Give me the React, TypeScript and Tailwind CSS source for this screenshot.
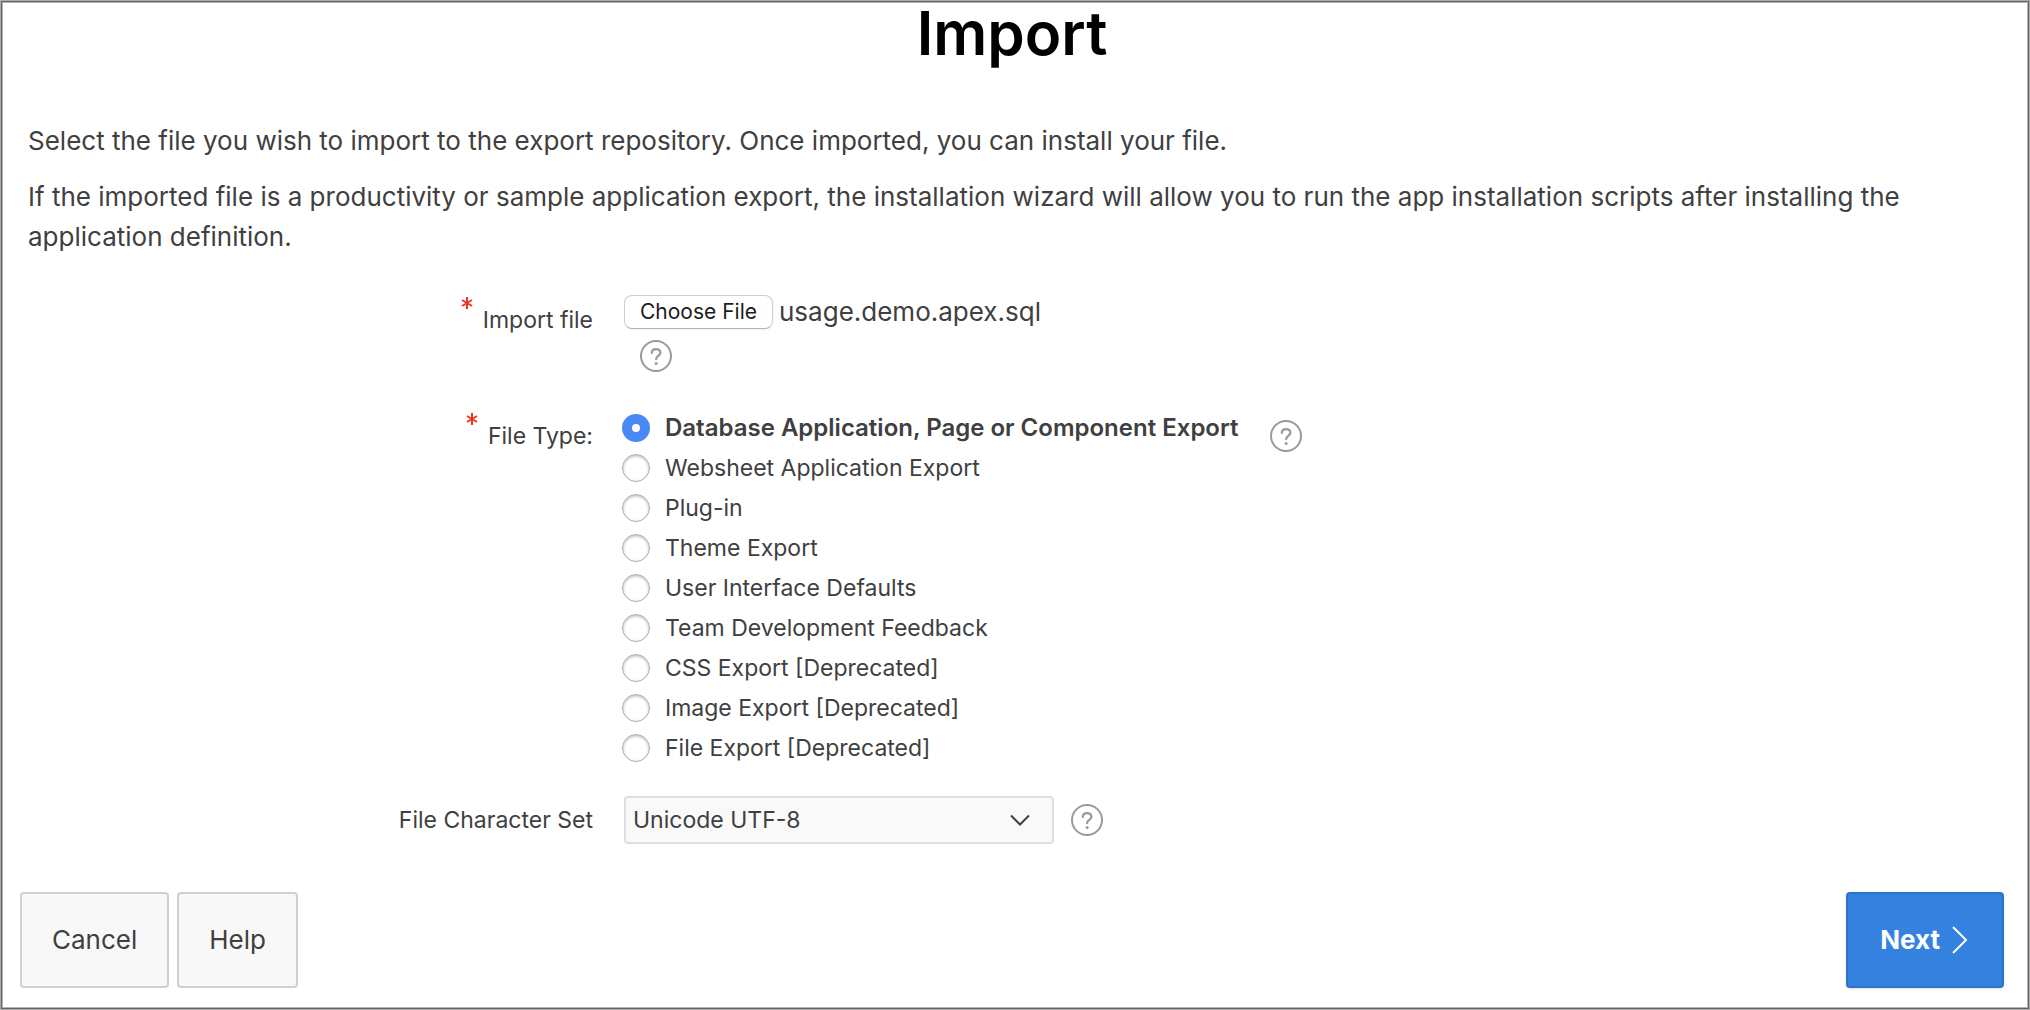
import { useRef, useState } from "react";

const fileTypes = [
  "Database Application, Page or Component Export",
  "Websheet Application Export",
  "Plug-in",
  "Theme Export",
  "User Interface Defaults",
  "Team Development Feedback",
  "CSS Export [Deprecated]",
  "Image Export [Deprecated]",
  "File Export [Deprecated]",
];

function HelpButton({ label }: { label: string }) {
  return (
    <button type="button" aria-label={label} className="block size-8 shrink-0 text-[#9a9a9a]">
      <svg viewBox="0 0 32 32" fill="none" stroke="currentColor" strokeWidth="2" className="size-8">
        <circle cx="16" cy="16" r="15" />
        <path d="M11.8 13c0-2.4 1.8-3.9 4.3-3.9s4.3 1.5 4.3 3.7c0 3.1-4.3 3.2-4.3 6.400" strokeWidth="2.2" strokeLinecap="round" />
        <circle cx="16.1" cy="23.5" r="1.5" fill="currentColor" stroke="none" />
      </svg>
    </button>
  );
}

function Asterisk() {
  return (
    <svg viewBox="0 0 12 14" fill="none" stroke="#ee3524" strokeWidth="2" className="h-[14px] w-3 shrink-0" aria-hidden="true">
      <path d="M6 1v12M1 4l10 6M11 4L1 10" />
    </svg>
  );
}

export default function App() {
  const fileInput = useRef<HTMLInputElement>(null);
  const [fileName, setFileName] = useState("usage.demo.apex.sql");
  const [fileType, setFileType] = useState(fileTypes[0]);

  return (
    <main className="flex min-h-screen flex-col border border-[#acacac] bg-white font-['Inter',sans-serif] text-[#404040] shadow-[inset_0_0_0_1px_#636363,inset_0_0_0_2px_#b4b4b4]">
      <h1 className="pr-1.5 text-center text-[60px] leading-16 font-semibold text-black">Import</h1>

      <div className="mt-14 space-y-4 px-[27px] text-[26px] leading-10">
        <p>Select the file you wish to import to the export repository. Once imported, you can install your file.</p>
        <p>
          If the imported file is a productivity or sample application export, the installation wizard will allow you to run the app
          installation scripts after installing the application definition.
        </p>
      </div>

      <form className="mt-[35px] flex grow flex-col text-[23px] leading-10">
        <div className="grid grid-cols-[592px_1fr] gap-x-[31px]">
          <div className="flex items-start justify-end gap-2.5 pt-1">
            <Asterisk />
            <label htmlFor="import-file" className="pt-1">Import file</label>
          </div>
          <div>
            <div className="flex h-10 items-center gap-1.5">
              <button
                type="button"
                onClick={() => fileInput.current?.click()}
                className="h-[34px] rounded-lg border border-[#cfcfcf] border-b-[#b5b5b5] bg-white px-[15px] text-[21px] leading-8 text-[#1c1c1c] shadow-xs"
              >
                Choose File
              </button>
              <input
                ref={fileInput}
                id="import-file"
                type="file"
                className="hidden"
                onChange={(e) => setFileName(e.target.files?.[0]?.name ?? "")}
              />
              <span className="text-[26px]">{fileName}</span>
            </div>
            <div className="mt-2 pl-4">
              <HelpButton label="Help: Import file" />
            </div>
          </div>
        </div>

        <div className="mt-9 grid grid-cols-[592px_1fr] gap-x-[29px]">
          <div className="flex items-start justify-end gap-2.5 pt-1">
            <Asterisk />
            <span id="file-type" className="pt-1">File Type:</span>
          </div>
          <div className="flex items-start gap-8">
            <div role="radiogroup" aria-labelledby="file-type">
              {fileTypes.map((type) => (
                <label key={type} className="flex items-center gap-[15px]">
                  <input
                    type="radio"
                    name="file-type"
                    checked={fileType === type}
                    onChange={() => setFileType(type)}
                    className="peer size-7 appearance-none rounded-full border border-[#b0b0b0] bg-white shadow-[inset_0_1px_3px_#00000050] checked:border-[10px] checked:border-[#4a88f5] checked:shadow-none"
                  />
                  <span className="peer-checked:text-[24px] peer-checked:font-semibold">{type}</span>
                </label>
              ))}
            </div>
            <div className="mt-3">
              <HelpButton label="Help: File Type" />
            </div>
          </div>
        </div>

        <div className="mt-7 grid grid-cols-[592px_1fr] items-center gap-x-[31px]">
          <label htmlFor="charset" className="text-right">File Character Set</label>
          <div className="flex items-center gap-[17px]">
            <div className="grid w-[430px] items-center">
              <select
                id="charset"
                className="col-start-1 row-start-1 h-12 appearance-none rounded-sm border-2 border-[#dfdfdf] bg-[#f9f9f9] px-[7px] leading-8"
              >
                <option>Unicode UTF-8</option>
              </select>
              <svg viewBox="0 0 20 12" fill="none" stroke="#404040" strokeWidth="2" className="pointer-events-none col-start-1 row-start-1 mr-6 h-3 w-5 justify-self-end" aria-hidden="true">
                <path d="M1 1.5l9 9 9-9" />
              </svg>
            </div>
            <HelpButton label="Help: File Character Set" />
          </div>
        </div>

        <div className="mt-auto flex gap-2 pr-[25px] pb-[21px] pl-[19px] text-[26px]">
          <button type="button" className="h-24 rounded-sm border-2 border-[#d0d0d0] bg-[#f8f8f8] px-[30px]">Cancel</button>
          <button type="button" className="h-24 rounded-sm border-2 border-[#d0d0d0] bg-[#f8f8f8] px-[30px]">Help</button>
          <button type="submit" className="ml-auto flex h-24 items-center gap-3 rounded-sm border-2 border-[#2d74c9] bg-[#3481e0] pr-[34px] pl-8 font-bold text-white shadow">
            Next
            <svg viewBox="0 0 16 28" fill="none" stroke="currentColor" strokeWidth="2" className="h-7 w-4" aria-hidden="true">
              <path d="M1 1l13 13L1 27" />
            </svg>
          </button>
        </div>
      </form>
    </main>
  );
}
